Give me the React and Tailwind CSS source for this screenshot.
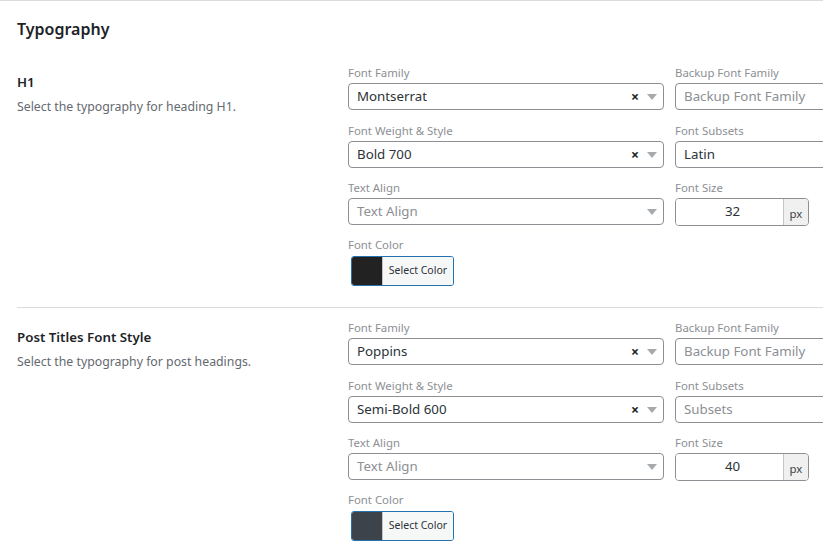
import React from 'react';

const fontStack = { fontFamily: '"Noto Sans", "Open Sans", sans-serif' };

const ClearArrow = ({ clearable }) => (
    <div className="flex items-center gap-[8px] pr-[6px]">
        {clearable && <span className="text-[14px] leading-none font-bold text-[#1d2327]">×</span>}
        <svg width="10" height="6" viewBox="0 0 10 6">
            <path d="M0 0 L10 0 L5 6 Z" fill="#a7aaad" />
        </svg>
    </div>
);

const SelectBox = ({ value, placeholder, clearable, arrow = true }) => (
    <div className="flex h-[27px] items-center justify-between rounded-[4px] border border-[#8c8f94] bg-white">
        <span className={`pl-[8px] text-[13.3px] ${value ? 'text-[#2c3338]' : 'text-[#8c8f94]'}`}>
            {value || placeholder}
        </span>
        {arrow && <ClearArrow clearable={clearable} />}
    </div>
);

const Field = ({ label, children, mb = 'mb-[12px]' }) => (
    <div className={mb}>
        <div className="mb-[2px] text-[11.4px] leading-[16px] text-[#8c8f94]">{label}</div>
        {children}
    </div>
);

const SizeInput = ({ value }) => (
    <div className="flex h-[28px] w-[134px] overflow-hidden rounded-[4px] border border-[#8c8f94]">
        <div className="flex flex-1 items-center justify-center bg-white pl-[6px] text-[13.3px] text-[#2c3338]">{value}</div>
        <div className="flex w-[25px] items-center justify-center border-l border-[#c3c4c7] bg-[#f0f0f1] pt-[3px] text-[11.4px] text-[#3c434a]">px</div>
    </div>
);

const ColorButton = ({ color }) => (
    <div className="ml-[3px] flex h-[30px] w-[103px] overflow-hidden rounded-[3px] border border-[#2271b1]">
        <div className="w-[30px]" style={{ background: color }} />
        <div className="flex flex-1 items-center justify-center border-l border-[#c3c4c7] bg-[#f6f7f7] text-[10.5px] text-[#2c3338]">
            Select Color
        </div>
    </div>
);

const TypographySection = ({ title, desc, family, weight, subsets, size, color, top }) => (
    <div className={`flex ${top}`}>
        <div className="w-[331px] shrink-0 pt-[7px]">
            <h3 className="text-[13.3px] font-semibold leading-[20px] text-[#1d2327]">{title}</h3>
            <p className="mt-[5px] text-[12.3px] leading-[20px] text-[#646970]">{desc}</p>
        </div>
        <div className="grid w-[643px] shrink-0 grid-cols-[316px_316px] gap-x-[11px]">
            <Field label="Font Family" mb="mb-[13px]">
                <SelectBox value={family} clearable />
            </Field>
            <Field label="Backup Font Family" mb="mb-[13px]">
                <SelectBox placeholder="Backup Font Family" arrow={false} />
            </Field>
            <Field label="Font Weight & Style">
                <SelectBox value={weight} clearable />
            </Field>
            <Field label="Font Subsets">
                <SelectBox value={subsets} placeholder="Subsets" arrow={false} />
            </Field>
            <Field label="Text Align">
                <SelectBox placeholder="Text Align" />
            </Field>
            <Field label="Font Size" mb="mb-[11px]">
                <SizeInput value={size} />
            </Field>
            <div className="col-span-2">
                <div className="mb-[3px] text-[11.4px] leading-[16px] text-[#8c8f94]">Font Color</div>
                <ColorButton color={color} />
            </div>
        </div>
    </div>
);

export default function App() {
    return (
        <div className="h-[557px] w-[823px] overflow-hidden border-t border-[#dcdcde] bg-white" style={fontStack}>
            <div className="pl-[17px]">
                <h2 className="pt-[16px] text-[16px] font-semibold leading-[24px] text-[#1d2327]">Typography</h2>
                <TypographySection
                    title="H1"
                    desc="Select the typography for heading H1."
                    family="Montserrat"
                    weight="Bold 700"
                    subsets="Latin"
                    size="32"
                    color="#222222"
                    top="mt-[24px]"
                />
                <div className="mt-[21px] border-t border-[#dcdcde]" />
                <TypographySection
                    title="Post Titles Font Style"
                    desc="Select the typography for post headings."
                    family="Poppins"
                    weight="Semi-Bold 600"
                    subsets=""
                    size="40"
                    color="#3c434a"
                    top="mt-[12px]"
                />
            </div>
        </div>
    );
}
